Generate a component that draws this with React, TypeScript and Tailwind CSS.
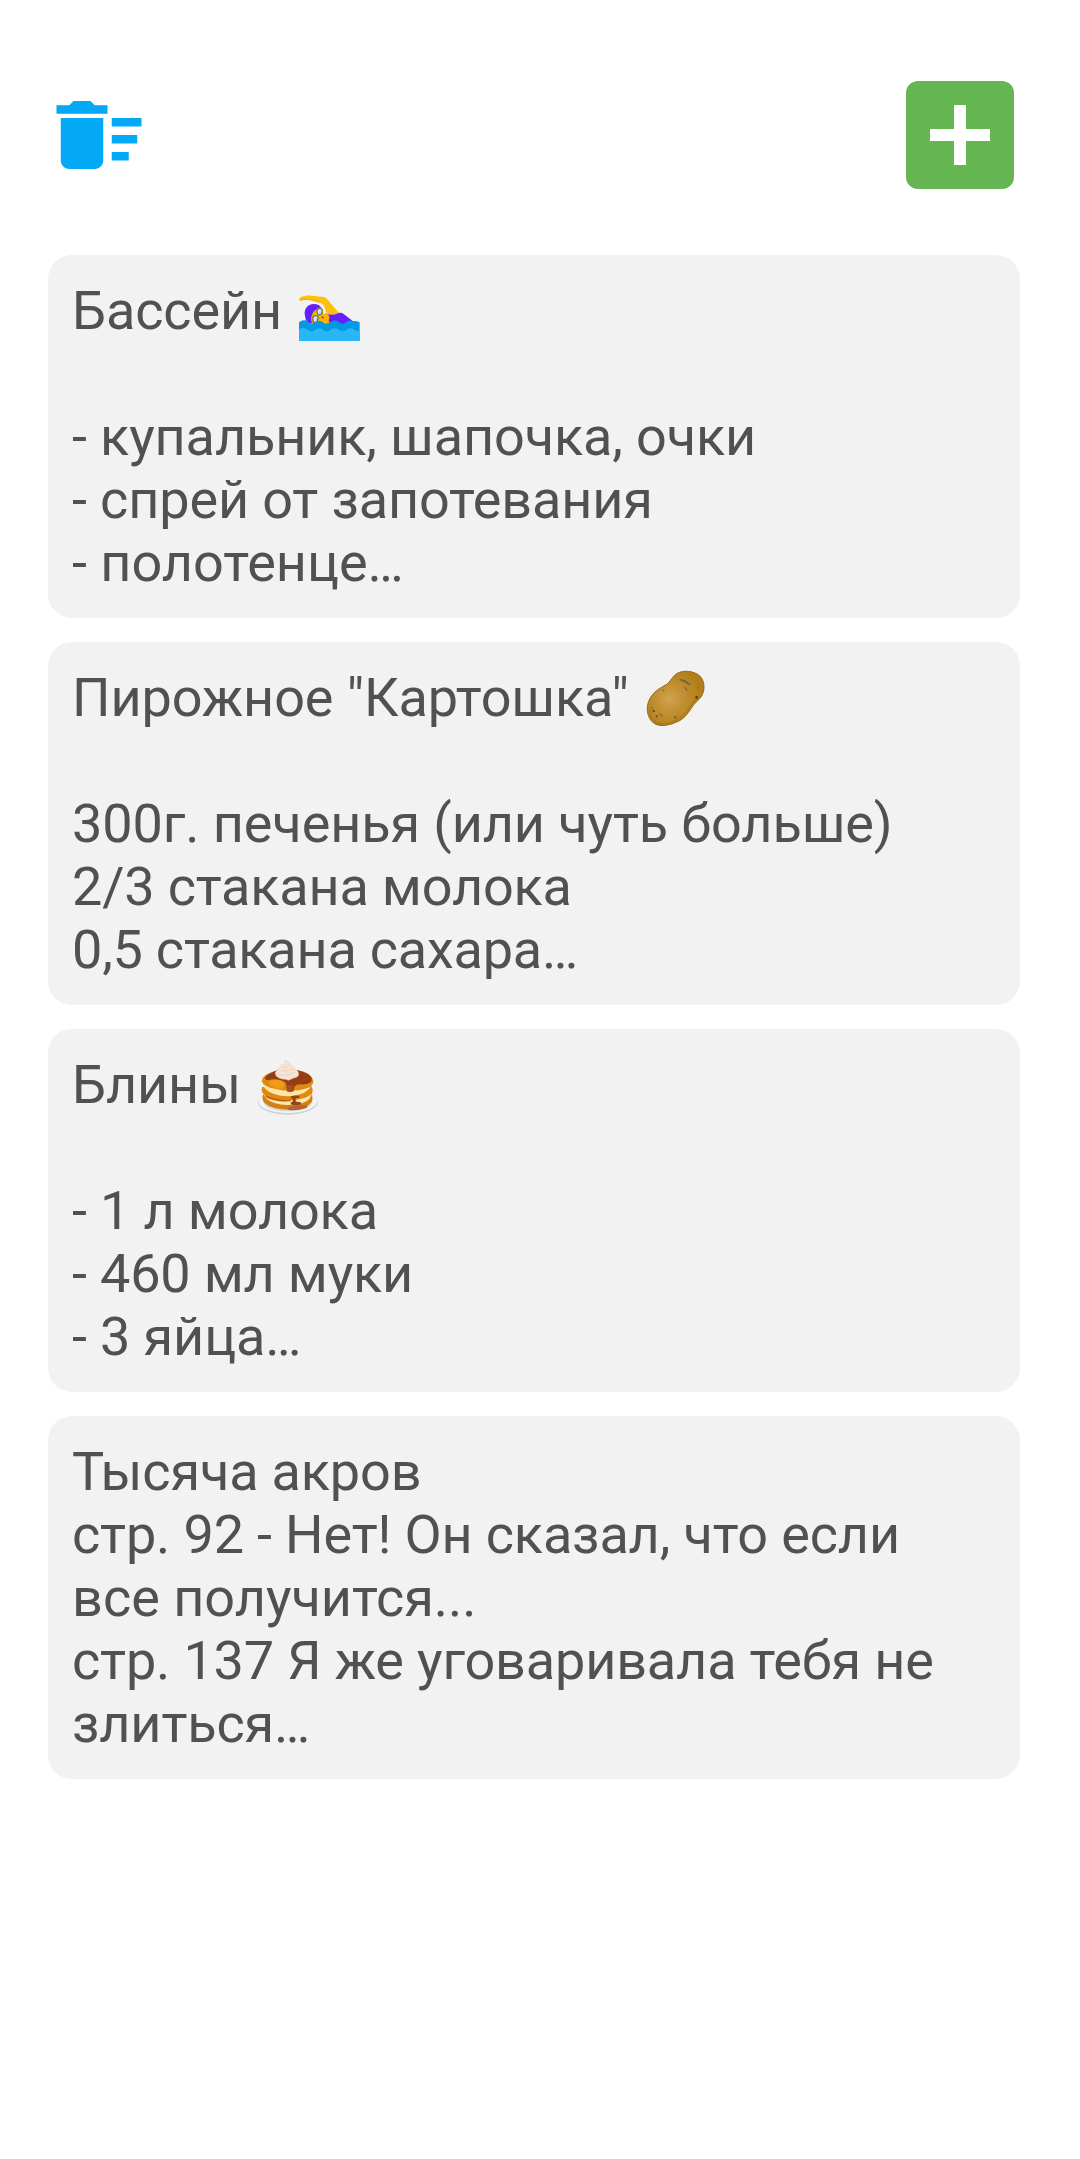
import type { ReactNode } from "react";

function DeleteSweepIcon() {
  return (
    <svg viewBox="0 0 24 24" className="size-[102px]" fill="#03a9f4" aria-hidden="true">
      <path d="M15 16h4v2h-4zm0-8h7v2h-7zm0 4h6v2h-6zM3 18c0 1.1.9 2 2 2h6c1.1 0 2-.9 2-2V8H3v10zM14 5h-3l-1-1H6L5 5H2v2h12z" />
    </svg>
  );
}

function SwimmerIcon() {
  return (
    <svg viewBox="48 -3 198 189" className="h-[63px] w-[66px] shrink-0" aria-hidden="true">
      <path
        d="M61 62Q56 59 59 54Q65 48 76 48Q84 44 94 47L132 51Q138 52 142 58L179 101L150 106L137 95Q137 82 125 70L111 63Q88 58 73 60Q65 58 61 62Z"
        fill="#ffc107"
      />
      <path d="M59 60Q72 53 84 57L112 62L125 71Q107 64 87 60Q72 57 61 63Z" fill="#f2a600" />
      <path d="M136 99Q150 108 171 101Q181 95 191 102L219 124L206 134L140 132Z" fill="#651fff" />
      <path d="M148 108Q142 119 150 130L132 132L126 112L138 99Z" fill="#ffb300" />
      <path d="M75 108C70 87 83 72 101 72C112 72 121 77 125 84L100 131L83 128Q76 120 75 108Z" fill="#651fff" />
      <path d="M96 129C90 112 97 88 122 82Q131 90 131 101L149 112Q145 128 132 132L100 134Z" fill="#ffb300" />
      <path d="M97 127Q91 102 112 86" fill="none" stroke="#e89b00" strokeWidth="3" />
      <path d="M111 89Q120 83 127 88L125 102L115 106Q109 99 111 89Z" fill="#b3e5fc" stroke="#455a64" strokeWidth="3" />
      <path d="M100 109Q108 104 115 111L111 126L101 128Q96 119 100 109Z" fill="#b3e5fc" stroke="#455a64" strokeWidth="3" />
      <path d="M115 93L122 91M103 115L109 111" stroke="#fff" strokeWidth="3" />
      <path d="M122 111L131 109L130 117Z" fill="#795548" />
      <path
        d="M57 127Q66 119 76 121Q83 123 88 128Q97 134 106 127Q117 117 129 127Q140 136 151 127Q164 117 176 126Q186 135 196 128Q207 118 219 123Q230 122 239 127V183H57Z"
        fill="#0399e4"
      />
      <path
        d="M57 148Q69 141 79 147L90 154Q97 156 106 149Q117 141 127 148L138 155Q146 155 154 148Q164 141 174 148L185 154Q193 155 202 148Q212 141 221 148L230 153L239 150V183H57Z"
        fill="#29b6f6"
      />
    </svg>
  );
}

function PotatoIcon() {
  return (
    <svg viewBox="39 18 198 189" className="h-[63px] w-[66px] shrink-0" aria-hidden="true">
      <defs>
        <radialGradient id="potato-skin" gradientUnits="userSpaceOnUse" cx="118" cy="117" r="100">
          <stop offset="0" stopColor="#d0a44e" />
          <stop offset="0.45" stopColor="#c18e31" />
          <stop offset="1" stopColor="#b17e1a" />
        </radialGradient>
      </defs>
      <path
        d="M135 45C150 31 181 30 203 43C223 56 227 84 216 106C208 120 194 128 184 144C173 162 161 178 140 186C118 196 91 201 74 191C57 181 49 157 53 135C58 107 80 89 102 78C120 69 123 55 135 45Z"
        fill="url(#potato-skin)"
        stroke="#916818"
        strokeWidth="3"
      />
      <path
        d="M59 150Q62 178 80 189Q102 196 138 181Q161 172 182 138Q190 124 208 109"
        fill="none"
        stroke="#a57010"
        strokeWidth="4"
        opacity=".6"
      />
      <path d="M149 57Q168 57 182 74L178 76Q164 65 149 61Z" fill="#6c644e" />
      <path d="M159 79Q168 81 175 93L169 92Z" fill="#826c43" />
      <path d="M87 158L98 166L100 170L91 167Z" fill="#826c43" />
      <ellipse cx="200" cy="112" rx="4" ry="5" fill="#6f3d0b" />
      <ellipse cx="71" cy="153" rx="4" ry="4" fill="#76501a" />
      <ellipse cx="80" cy="169" rx="3" ry="4" fill="#76501a" />
      <ellipse cx="65" cy="143" rx="2" ry="3" fill="#8b5d16" />
      <ellipse cx="136" cy="172" rx="4" ry="4" fill="#926126" />
      <ellipse cx="100" cy="91" rx="3" ry="3" fill="#9a7028" />
      <path d="M204 70V94" stroke="#a57010" strokeWidth="2" />
    </svg>
  );
}

function PancakesIcon() {
  return (
    <svg viewBox="30 9 198 189" className="h-[63px] w-[66px] shrink-0" aria-hidden="true">
      <ellipse cx="128" cy="157" rx="90" ry="37" fill="#cfd3d5" />
      <ellipse cx="128" cy="154" rx="88" ry="35" fill="#f3f4f5" />
      <ellipse cx="128" cy="157" rx="72" ry="27" fill="#d7d9da" />
      <path d="M54 134Q49 146 58 158Q82 180 137 179Q190 176 201 154Q205 142 199 133Z" fill="#d47f13" />
      <path d="M56 129Q58 148 86 158Q119 170 159 162Q194 155 198 137L197 126Z" fill="#ffe6aa" />
      <path d="M52 111Q46 123 57 134Q83 153 136 151Q188 148 201 130Q206 119 199 109Z" fill="#df8912" />
      <path d="M62 136Q97 153 138 149L137 154Q87 157 62 141Z" fill="#b9610b" />
      <path d="M54 103Q57 121 85 131Q126 145 165 133Q194 124 198 105Z" fill="#ffe5a8" />
      <path d="M50 94Q53 72 89 64Q128 51 170 64Q202 75 205 93Q206 108 186 115Q143 129 92 117Q56 111 50 94Z" fill="#dd8b15" />
      <path
        d="M59 84Q77 61 118 57Q162 57 190 72Q208 88 195 98Q184 104 169 103Q155 102 148 110L146 122Q140 129 127 124L124 110Q126 95 108 91Q84 85 72 90Q61 92 59 84Z"
        fill="#973d14"
      />
      <path d="M72 97Q80 86 103 90Q121 96 117 108Q113 117 97 115Q76 111 72 97Z" fill="#f09b18" />
      <path d="M125 106L144 106L143 121Q134 129 125 123Z" fill="#a7501d" />
      <path d="M139 139Q151 134 164 139L162 144L152 145L152 154Q158 157 168 157L167 163Q151 169 137 163L138 157L143 155L143 146L137 144Z" fill="#96421a" />
      <path d="M127 173Q149 164 184 166Q190 169 184 174Q153 184 128 179Z" fill="#b46430" />
      <path
        d="M93 77Q87 66 97 61Q99 53 107 53Q105 45 117 43Q126 40 121 32Q134 34 136 45Q148 49 148 57Q160 61 161 71Q162 81 146 84L131 91Q121 87 112 87Q101 86 93 77Z"
        fill="#f5e4d5"
        stroke="#e0c6b3"
        strokeWidth="1.5"
      />
      <path
        d="M98 73Q120 80 151 67M107 62Q127 67 144 57M113 54Q125 54 132 46"
        fill="none"
        stroke="#e8d1be"
        strokeWidth="2.5"
      />
    </svg>
  );
}

type Line = { text: string; tracking?: string };
type Note = { title: Line; icon?: ReactNode; lines: Line[] };

const notes: Note[] = [
  {
    title: { text: "Бассейн", tracking: "tracking-[-0.14px]" },
    icon: <SwimmerIcon />,
    lines: [
      { text: "" },
      { text: "- купальник, шапочка, очки", tracking: "tracking-[-0.12px]" },
      { text: "- спрей от запотевания", tracking: "tracking-[-0.13px]" },
      { text: "- полотенце…" },
    ],
  },
  {
    title: { text: 'Пирожное "Картошка"', tracking: "tracking-[-0.1px]" },
    icon: <PotatoIcon />,
    lines: [
      { text: "" },
      { text: "300г. печенья (или чуть больше)", tracking: "tracking-[-0.1px]" },
      { text: "2/3 стакана молока", tracking: "tracking-[-0.18px]" },
      { text: "0,5 стакана сахара…", tracking: "tracking-[-0.22px]" },
    ],
  },
  {
    title: { text: "Блины", tracking: "tracking-[-0.1px]" },
    icon: <PancakesIcon />,
    lines: [
      { text: "" },
      { text: "- 1 л молока", tracking: "tracking-[-0.15px]" },
      { text: "- 460 мл муки", tracking: "tracking-[-0.18px]" },
      { text: "- 3 яйца…", tracking: "tracking-[-0.12px]" },
    ],
  },
  {
    title: { text: "Тысяча акров", tracking: "tracking-[-0.16px]" },
    lines: [
      { text: "стр. 92 - Нет! Он сказал, что если", tracking: "tracking-[-0.15px]" },
      { text: "все получится..." },
      { text: "стр. 137 Я же уговаривала тебя не", tracking: "tracking-[-0.16px]" },
      { text: "злиться…", tracking: "tracking-[-0.14px]" },
    ],
  },
];

function NoteCard({ note }: { note: Note }) {
  return (
    <article className="rounded-3xl bg-[#f2f2f2] p-6 text-[54px] leading-[63px] whitespace-pre text-[#515151]">
      <h2 className="flex h-[63px] gap-[14px]">
        <span className={note.title.tracking}>{note.title.text}</span>
        {note.icon}
      </h2>
      {note.lines.map((line, i) => (
        <p key={i} className={`h-[63px] ${line.tracking ?? ""}`}>
          {line.text}
        </p>
      ))}
    </article>
  );
}

export default function App() {
  return (
    <main className="min-h-[2159px] w-[1080px] bg-white font-[Roboto,sans-serif]">
      <header className="flex h-[255px] items-start justify-between pr-[66px] pl-12">
        <button aria-label="Удалить" className="mt-[84px]">
          <DeleteSweepIcon />
        </button>
        <button
          aria-label="Добавить"
          className="mt-[81px] flex size-[108px] items-center justify-center rounded-xl bg-[#66b553]"
        >
          <svg viewBox="0 0 60 60" className="size-[60px]" fill="#fff" aria-hidden="true">
            <path d="M24 0h12v24h24v12H36v24H24V36H0V24h24z" />
          </svg>
        </button>
      </header>
      <section className="mr-[60px] ml-12 flex flex-col gap-6">
        {notes.map((note) => (
          <NoteCard key={note.title.text} note={note} />
        ))}
      </section>
    </main>
  );
}
